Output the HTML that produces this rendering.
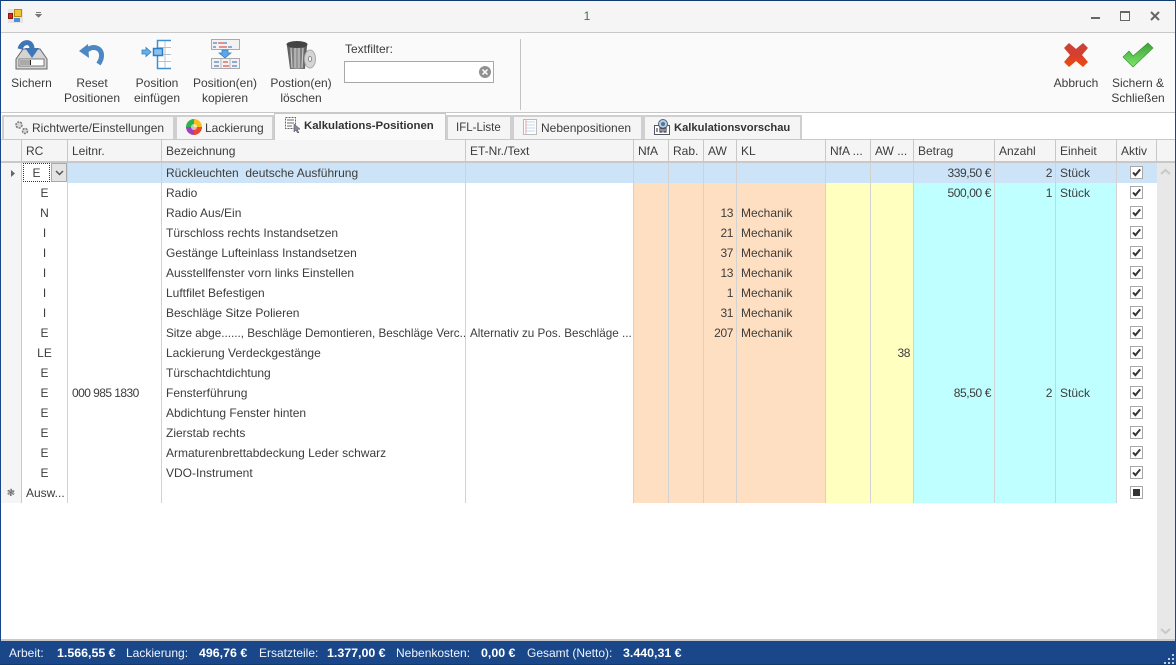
<!DOCTYPE html>
<html><head><meta charset="utf-8"><style>
*{box-sizing:border-box}
html,body{margin:0;padding:0}
body{width:1176px;height:665px;position:relative;overflow:hidden;background:#fff;font:12px/16px "Liberation Sans",sans-serif;color:#3c3c3c}
.a{position:absolute}
.t{position:absolute;white-space:pre;text-align:center;line-height:15px}
.tab{position:absolute;top:115px;height:25px;background:#f5f5f5;border:2px solid #cfcfcf;border-bottom:0;line-height:22px;white-space:pre}
table{position:absolute;left:1px;top:140px;border-collapse:separate;border-spacing:0;table-layout:fixed;width:1156px}
td,th{height:20px;padding:0 4px;border-right:1px solid #d2d2d2;overflow:hidden;white-space:pre;font-weight:normal;text-align:left;line-height:19px}
th{height:23px;background:#f5f5f5;border-bottom:2px solid #c8c8c8;border-right:1px solid #c8c8c8;line-height:20px;padding-top:1px}
td.h{background:#f5f5f5;border-right:1px solid #c8c8c8;padding:0}
td.c{text-align:center}
td.r{text-align:right;letter-spacing:-.4px;padding-right:3px}
td.n{letter-spacing:-.55px}
td.f{font-size:11.700px}
td.p{background:#ffdfc1}td.y{background:#ffffc0}td.b{background:#c0ffff}
tr.s td{background:#cde3f7}
tr.s td.h{background:#f5f5f5}
td.k{border-right:0;padding:0;position:relative}
.k svg{position:absolute;left:13px;top:3px}
.st{position:absolute;top:646px;color:#f0f4fa;white-space:pre;line-height:14px}
.st b{color:#fff;font-size:12.400px}
</style></head><body>
<svg width="0" height="0" style="position:absolute"><defs>
<g id="c"><rect x=".5" y=".5" width="12" height="12" fill="#fff" stroke="#a8a8a8"/><path d="M3 6.500l2.400 2.600L10.200 3.400" fill="none" stroke="#333" stroke-width="2"/></g>
<g id="d"><rect x=".5" y=".5" width="12" height="12" fill="#fff" stroke="#a8a8a8"/><rect x="3" y="3" width="7" height="7" fill="#333"/></g>
<linearGradient id="gx" x1="0" y1="0" x2="0" y2="1"><stop offset="0" stop-color="#c8423a"/><stop offset=".55" stop-color="#d8402c"/><stop offset="1" stop-color="#f04a08"/></linearGradient>
<linearGradient id="gc" x1="0" y1="0" x2="0" y2="1"><stop offset="0" stop-color="#3ea23a"/><stop offset="1" stop-color="#7ae868"/></linearGradient>
<linearGradient id="gt" x1="0" y1="0" x2="1" y2="0"><stop offset="0" stop-color="#555"/><stop offset=".5" stop-color="#999"/><stop offset="1" stop-color="#555"/></linearGradient>
</defs></svg>

<!-- title bar -->
<div class="a" style="left:0;top:0;width:1176px;height:33px;background:#f5f5f5;border-bottom:1px solid #c8c8c8"></div>
<div class="a" style="left:0;top:33px;width:1176px;height:80px;background:#fafafa;border-bottom:1px solid #c8c8c8"></div>
<svg class="a" style="left:8px;top:9px" width="15" height="15"><rect x="0" y="0" width="15" height="14" fill="#e4e4e4"/><rect x="6.500" y=".5" width="7" height="7" fill="#f4c430" stroke="#b88a10"/><rect x=".5" y="4.500" width="4" height="5" fill="#d8281c" stroke="#8a1810"/><rect x="6" y="9" width="6" height="4" fill="#4a90d8"/></svg>
<svg class="a" style="left:35px;top:12px" width="7" height="6"><path d="M1 .5h5M1 2.500h5L3.500 5z" stroke="#777" fill="#777" stroke-width="1"/></svg>
<div class="t" style="left:582px;top:9px;width:10px;color:#3c6e5a">1</div>
<div class="a" style="left:1091px;top:17px;width:9px;height:2px;background:#666"></div>
<div class="a" style="left:1120px;top:11px;width:10px;height:10px;border:1px solid #666;border-top-width:2px"></div>
<svg class="a" style="left:1150px;top:11px" width="10" height="10"><path d="M1 1l8 8M9 1l-8 8" stroke="#666" stroke-width="2"/></svg>

<!-- toolbar icons -->
<svg class="a" style="left:15px;top:39px" width="33" height="32">
<path d="M1 20L8 10h17l7 10v10H1z" fill="#d4d4d4" stroke="#666"/><rect x="4" y="20" width="25" height="7" fill="#fff" stroke="#777"/><rect x="5" y="21" width="10" height="5" fill="#aaa"/><rect x="15" y="21" width="1" height="5" fill="#222"/>
<path d="M5 10C7 2 17 1 17 10" fill="none" stroke="#3f76b8" stroke-width="5"/><path d="M10 9h14l-7 10z" fill="#3f76b8"/></svg>
<svg class="a" style="left:78px;top:42px" width="28" height="25"><path d="M8 9C14 3 24 5 23.500 14c0 3-1 5-3 8" fill="none" stroke="#4f87c4" stroke-width="5"/><path d="M1 9l9-7 1 14z" fill="#4f87c4"/></svg>
<svg class="a" style="left:140px;top:39px" width="33" height="31"><path d="M31 1.500H17.500v28H31" fill="#fff" stroke="#3a90d0" stroke-width="1.500"/><path d="M18 8.500h13M18 15.500h13M18 22.500h13M25 2v27" stroke="#b8c4cc"/><rect x="13.500" y="9.500" width="9" height="7" fill="#8cc0ea" stroke="#2a7fc4" stroke-width="1.500"/><path d="M2 11h4V8.500l5 4.500-5 4.500V15H2z" fill="#6ab0e8" stroke="#2a7fc4" stroke-width=".8"/></svg>
<svg class="a" style="left:210px;top:39px" width="31" height="32"><rect x="1.500" y=".5" width="28" height="10" fill="#f2f2f2" stroke="#aaa"/><path d="M3 4h4M13 4h4M3 8h3M18 8h4" stroke="#2a62b8"/><path d="M8 4h5M9 8h8" stroke="#d83020"/><path d="M12 11h6v3h3l-6 5-6-5h3z" fill="#5aa6e6" stroke="#2a7fc4" stroke-width=".7"/><rect x="1.500" y="19.500" width="28" height="10" fill="#f2f2f2" stroke="#aaa"/><path d="M11 20v9M20 20v9" stroke="#bbb"/><path d="M4 23h5M22 23h5M4 27h5M22 27h5" stroke="#2a62b8"/><path d="M13 23h5M13 27h6" stroke="#d83020"/></svg>
<svg class="a" style="left:285px;top:40px" width="31" height="32"><path d="M2 6h20l-2 23H5z" fill="url(#gt)"/><path d="M6 8l1 20M10 8v20M14 8v20M18 8l-1 20" stroke="#c8c8c8" stroke-width="1.200"/><ellipse cx="12" cy="4.500" rx="10.500" ry="3.500" fill="#444"/><ellipse cx="25" cy="19" rx="5.500" ry="9" fill="#d4d4d4" stroke="#aaa"/><ellipse cx="25" cy="19" rx="1.600" ry="2.500" fill="#fff" stroke="#888"/></svg>

<div class="t" style="left:0;top:76px;width:63px">Sichern</div>
<div class="t" style="left:57px;top:76px;width:70px">Reset
Positionen</div>
<div class="t" style="left:122px;top:76px;width:70px">Position
einfügen</div>
<div class="t" style="left:185px;top:76px;width:80px">Position(en)
kopieren</div>
<div class="t" style="left:261px;top:76px;width:80px">Postion(en)
löschen</div>
<div class="t" style="left:345px;top:42px">Textfilter:</div>
<div class="a" style="left:344px;top:61px;width:150px;height:22px;background:#fff;border:1px solid #a8a8a8"></div>
<svg class="a" style="left:479px;top:66px" width="12" height="12"><circle cx="6" cy="6" r="6" fill="#909090"/><path d="M3.500 3.500l5 5M8.500 3.500l-5 5" stroke="#fff" stroke-width="1.500"/></svg>
<div class="a" style="left:520px;top:39px;width:1px;height:71px;background:#c4c4c4"></div>
<svg class="a" style="left:1063px;top:42px" width="26" height="26"><path d="M6 2l7 6 7-6 4 4-6 7 6 7-4 4-7-6-7 6-4-4 6-7-6-7z" fill="url(#gx)" stroke="url(#gx)" stroke-width="1.500" stroke-linejoin="round"/></svg>
<svg class="a" style="left:1122px;top:42px" width="32" height="26"><path d="M1 15l6-6 4 5L26 1l5 5-20 19z" fill="url(#gc)" stroke="#3a9234" stroke-width=".7" stroke-linejoin="round"/></svg>
<div class="t" style="left:1046px;top:76px;width:60px">Abbruch</div>
<div class="t" style="left:1106px;top:76px;width:64px">Sichern &amp;
Schließen</div>

<!-- tabs -->
<div class="tab" style="left:2px;width:173px;padding-left:28px">Richtwerte/Einstellungen</div>
<svg class="a" style="left:14px;top:120px" width="15" height="15"><circle cx="5" cy="5" r="3" fill="#d8d8d8" stroke="#777" stroke-width="1.500" stroke-dasharray="2 1"/><circle cx="11" cy="11" r="2.500" fill="#d8d8d8" stroke="#777" stroke-width="1.500" stroke-dasharray="2 1"/></svg>
<div class="tab" style="left:175px;width:99px;padding-left:28px">Lackierung</div>
<svg class="a" style="left:186px;top:119px" width="16" height="16"><path d="M8 8V0A8 8 0 0 1 16 8z" fill="#f4c020"/><path d="M8 8h8A8 8 0 0 1 8 16z" fill="#e84830"/><path d="M8 8v8A8 8 0 0 1 0 8z" fill="#a040c0"/><path d="M8 8H0A8 8 0 0 1 8 0z" fill="#30b050"/><circle cx="8" cy="8" r="3" fill="#fff" opacity=".6"/></svg>
<div class="a" style="left:274px;top:113px;width:172px;height:28px;background:#fafafa;border:1px solid #c8c8c8;border-bottom:0"></div>
<div class="a" style="left:304px;top:118px;font-weight:bold;font-size:11.400px;white-space:pre;line-height:16px;color:#333">Kalkulations-Positionen</div>
<svg class="a" style="left:285px;top:117px" width="16" height="16"><rect x=".5" y=".5" width="10" height="11" fill="#fff" stroke="#666" stroke-dasharray="2 1"/><path d="M2 3h7M2 6h7M2 9h5" stroke="#666"/><path d="M9 7l6 5-3 .5 2 3-1.500 .5-1.500-3-2 2z" fill="#889" stroke="#445" stroke-width=".5"/></svg>
<div class="tab" style="left:446px;width:66px;padding-left:8px;font-size:11.500px">IFL-Liste</div>
<div class="tab" style="left:512px;width:131px;padding-left:27px">Nebenpositionen</div>
<svg class="a" style="left:523px;top:119px" width="14" height="16"><rect x=".5" y=".5" width="13" height="15" fill="#fff" stroke="#bbb"/><path d="M2 3h10M2 6h10M2 9h10M2 12h10" stroke="#c8d4e4"/><path d="M3 1v14" stroke="#eaa"/></svg>
<div class="tab" style="left:643px;width:159px;padding-left:29px;font-weight:bold;font-size:11.200px;color:#333">Kalkulationsvorschau</div>
<svg class="a" style="left:654px;top:119px" width="16" height="16"><rect x=".5" y="6.500" width="15" height="9" fill="#fff" stroke="#556"/><circle cx="9" cy="5" r="4.500" fill="#bcd" stroke="#567"/><circle cx="9" cy="5" r="2" fill="#47a"/><path d="M3 9v4M6 9h2v4H6zM10 9h2v4h-2z" stroke="#223" fill="none"/></svg>
<div class="a" style="left:0;top:139px;width:274px;height:1px;background:#c8c8c8"></div>
<div class="a" style="left:446px;top:139px;width:730px;height:1px;background:#c8c8c8"></div>

<!-- scrollbar -->
<div class="a" style="left:1157px;top:163px;width:18px;height:476px;background:#e8e8e8"></div>
<svg class="a" style="left:1160px;top:168px" width="11" height="7"><path d="M1 6l4.500-4L10 6" fill="none" stroke="#c8c8c8" stroke-width="2"/></svg>
<svg class="a" style="left:1160px;top:628px" width="11" height="7"><path d="M1 1l4.500 4L10 1" fill="none" stroke="#c8c8c8" stroke-width="2"/></svg>
<div class="a" style="left:1157px;top:140px;width:18px;height:23px;background:#f5f5f5;border-bottom:2px solid #c8c8c8"></div>

<!-- grid -->
<table>
<colgroup><col style="width:21px"><col style="width:46px"><col style="width:94px"><col style="width:304px"><col style="width:168px"><col style="width:35px"><col style="width:35px"><col style="width:33px"><col style="width:89px"><col style="width:45px"><col style="width:43px"><col style="width:81px"><col style="width:61px"><col style="width:61px"><col style="width:40px"></colgroup>
<tr><th></th><th>RC</th><th>Leitnr.</th><th>Bezeichnung</th><th>ET-Nr./Text</th><th>NfA</th><th>Rab.</th><th>AW</th><th>KL</th><th>NfA ...</th><th>AW ...</th><th>Betrag</th><th>Anzahl</th><th>Einheit</th><th>Aktiv</th></tr>
<tr class="s"><td class="h"><svg width="20" height="20" style="display:block"><path d="M10 7l4 3.500-4 3.500z" fill="#666"/></svg></td><td style="background:#fff;padding:0;position:relative"><span class="a" style="left:1px;top:0;width:27px;height:19px;border:1px dotted #333;text-align:center;line-height:18px">E</span><span class="a" style="left:29px;top:0;width:16px;height:19px;background:#e4e4e4;border:1px solid #aaa"></span><svg class="a" style="left:33px;top:7px" width="9" height="6"><path d="M1 1l3.500 3.500L8 1" fill="none" stroke="#555" stroke-width="1.500"/></svg></td><td></td><td>Rückleuchten  deutsche Ausführung</td><td></td><td></td><td></td><td></td><td></td><td></td><td></td><td class="r">339,50 €</td><td class="r">2</td><td>Stück</td><td class="k"><svg width="13" height="13"><use href="#c"/></svg></td></tr>
<tr><td class="h"></td><td class="c">E</td><td></td><td>Radio</td><td></td><td class="p"></td><td class="p"></td><td class="p"></td><td class="p"></td><td class="y"></td><td class="y"></td><td class="b r">500,00 €</td><td class="b r">1</td><td class="b">Stück</td><td class="k"><svg width="13" height="13"><use href="#c"/></svg></td></tr>
<tr><td class="h"></td><td class="c">N</td><td></td><td>Radio Aus/Ein</td><td></td><td class="p"></td><td class="p"></td><td class="p r">13</td><td class="p">Mechanik</td><td class="y"></td><td class="y"></td><td class="b"></td><td class="b"></td><td class="b"></td><td class="k"><svg width="13" height="13"><use href="#c"/></svg></td></tr>
<tr><td class="h"></td><td class="c">I</td><td></td><td>Türschloss rechts Instandsetzen</td><td></td><td class="p"></td><td class="p"></td><td class="p r">21</td><td class="p">Mechanik</td><td class="y"></td><td class="y"></td><td class="b"></td><td class="b"></td><td class="b"></td><td class="k"><svg width="13" height="13"><use href="#c"/></svg></td></tr>
<tr><td class="h"></td><td class="c">I</td><td></td><td>Gestänge Lufteinlass Instandsetzen</td><td></td><td class="p"></td><td class="p"></td><td class="p r">37</td><td class="p">Mechanik</td><td class="y"></td><td class="y"></td><td class="b"></td><td class="b"></td><td class="b"></td><td class="k"><svg width="13" height="13"><use href="#c"/></svg></td></tr>
<tr><td class="h"></td><td class="c">I</td><td></td><td>Ausstellfenster vorn links Einstellen</td><td></td><td class="p"></td><td class="p"></td><td class="p r">13</td><td class="p">Mechanik</td><td class="y"></td><td class="y"></td><td class="b"></td><td class="b"></td><td class="b"></td><td class="k"><svg width="13" height="13"><use href="#c"/></svg></td></tr>
<tr><td class="h"></td><td class="c">I</td><td></td><td>Luftfilet Befestigen</td><td></td><td class="p"></td><td class="p"></td><td class="p r">1</td><td class="p">Mechanik</td><td class="y"></td><td class="y"></td><td class="b"></td><td class="b"></td><td class="b"></td><td class="k"><svg width="13" height="13"><use href="#c"/></svg></td></tr>
<tr><td class="h"></td><td class="c">I</td><td></td><td>Beschläge Sitze Polieren</td><td></td><td class="p"></td><td class="p"></td><td class="p r">31</td><td class="p">Mechanik</td><td class="y"></td><td class="y"></td><td class="b"></td><td class="b"></td><td class="b"></td><td class="k"><svg width="13" height="13"><use href="#c"/></svg></td></tr>
<tr><td class="h"></td><td class="c">E</td><td></td><td class="f">Sitze abge......, Beschläge Demontieren, Beschläge Verc...</td><td class="f">Alternativ zu Pos. Beschläge ...</td><td class="p"></td><td class="p"></td><td class="p r">207</td><td class="p">Mechanik</td><td class="y"></td><td class="y"></td><td class="b"></td><td class="b"></td><td class="b"></td><td class="k"><svg width="13" height="13"><use href="#c"/></svg></td></tr>
<tr><td class="h"></td><td class="c">LE</td><td></td><td>Lackierung Verdeckgestänge</td><td></td><td class="p"></td><td class="p"></td><td class="p"></td><td class="p"></td><td class="y"></td><td class="y r">38</td><td class="b"></td><td class="b"></td><td class="b"></td><td class="k"><svg width="13" height="13"><use href="#c"/></svg></td></tr>
<tr><td class="h"></td><td class="c">E</td><td></td><td>Türschachtdichtung</td><td></td><td class="p"></td><td class="p"></td><td class="p"></td><td class="p"></td><td class="y"></td><td class="y"></td><td class="b"></td><td class="b"></td><td class="b"></td><td class="k"><svg width="13" height="13"><use href="#c"/></svg></td></tr>
<tr><td class="h"></td><td class="c">E</td><td class="n">000 985 1830</td><td>Fensterführung</td><td></td><td class="p"></td><td class="p"></td><td class="p"></td><td class="p"></td><td class="y"></td><td class="y"></td><td class="b r">85,50 €</td><td class="b r">2</td><td class="b">Stück</td><td class="k"><svg width="13" height="13"><use href="#c"/></svg></td></tr>
<tr><td class="h"></td><td class="c">E</td><td></td><td>Abdichtung Fenster hinten</td><td></td><td class="p"></td><td class="p"></td><td class="p"></td><td class="p"></td><td class="y"></td><td class="y"></td><td class="b"></td><td class="b"></td><td class="b"></td><td class="k"><svg width="13" height="13"><use href="#c"/></svg></td></tr>
<tr><td class="h"></td><td class="c">E</td><td></td><td>Zierstab rechts</td><td></td><td class="p"></td><td class="p"></td><td class="p"></td><td class="p"></td><td class="y"></td><td class="y"></td><td class="b"></td><td class="b"></td><td class="b"></td><td class="k"><svg width="13" height="13"><use href="#c"/></svg></td></tr>
<tr><td class="h"></td><td class="c">E</td><td></td><td>Armaturenbrettabdeckung Leder schwarz</td><td></td><td class="p"></td><td class="p"></td><td class="p"></td><td class="p"></td><td class="y"></td><td class="y"></td><td class="b"></td><td class="b"></td><td class="b"></td><td class="k"><svg width="13" height="13"><use href="#c"/></svg></td></tr>
<tr><td class="h"></td><td class="c">E</td><td></td><td>VDO-Instrument</td><td></td><td class="p"></td><td class="p"></td><td class="p"></td><td class="p"></td><td class="y"></td><td class="y"></td><td class="b"></td><td class="b"></td><td class="b"></td><td class="k"><svg width="13" height="13"><use href="#c"/></svg></td></tr>
<tr><td class="h" style="text-align:center;font-size:10px;color:#666">&#10051;</td><td>Ausw...</td><td></td><td></td><td></td><td class="p"></td><td class="p"></td><td class="p"></td><td class="p"></td><td class="y"></td><td class="y"></td><td class="b"></td><td class="b"></td><td class="b"></td><td class="k"><svg width="13" height="13"><use href="#d"/></svg></td></tr>
</table>

<!-- bottom + window frame -->
<div class="a" style="left:0;top:639px;width:1176px;height:2px;background:#c8c8c8"></div>
<div class="a" style="left:0;top:641px;width:1176px;height:24px;background:#19478a"></div>
<div class="a" style="left:0;top:0;width:1176px;height:1px;background:#123a6e"></div>
<div class="a" style="left:0;top:0;width:1px;height:665px;background:#19478a"></div>
<div class="a" style="left:1175px;top:0;width:1px;height:665px;background:#19478a"></div>
<div class="a" style="left:0;top:664px;width:1176px;height:1px;background:#123a6e"></div>
<span class="st" style="left:9px">Arbeit:</span><span class="st" style="left:57px"><b>1.566,55 €</b></span>
<span class="st" style="left:126px">Lackierung:</span><span class="st" style="left:199px"><b>496,76 €</b></span>
<span class="st" style="left:259px">Ersatzteile:</span><span class="st" style="left:327px"><b>1.377,00 €</b></span>
<span class="st" style="left:396px">Nebenkosten:</span><span class="st" style="left:481px"><b>0,00 €</b></span>
<span class="st" style="left:527px">Gesamt (Netto):</span><span class="st" style="left:623px"><b>3.440,31 €</b></span>
<svg class="a" style="left:1164px;top:653px" width="11" height="11"><path d="M8 1h2v2H8zM4 5h2v2H4zM8 5h2v2H8zM0 9h2v2H0zM4 9h2v2H4zM8 9h2v2H8z" fill="#c4d0e0"/></svg>
</body></html>
